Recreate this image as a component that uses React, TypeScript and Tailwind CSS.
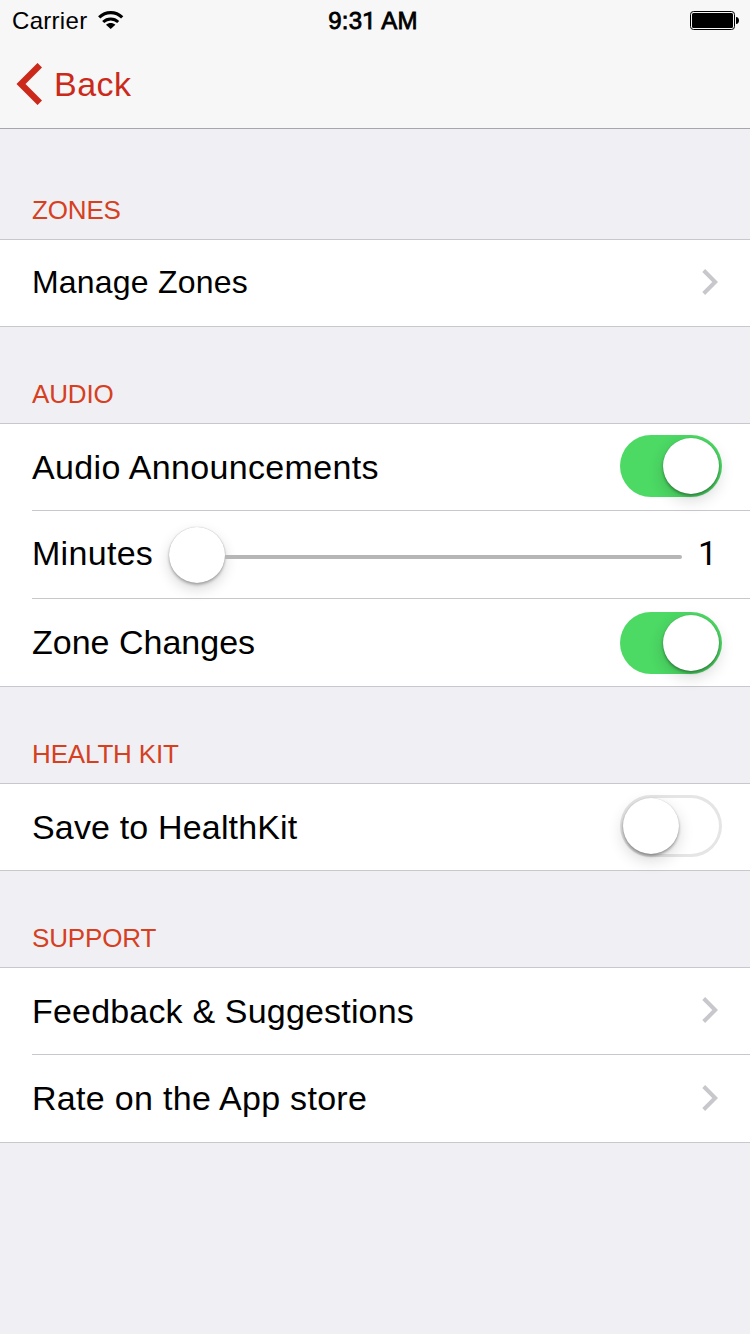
import type { ReactNode } from "react";

function Chevron() {
  return (
    <svg className="mt-[29px] h-[26px] w-4 shrink-0" viewBox="0 0 16 26" fill="none">
      <path d="M1.7 1.5 L13.2 13 L1.7 24.5" stroke="#c7c7cc" strokeWidth="4" />
    </svg>
  );
}

function Switch({ on, className }: { on: boolean; className: string }) {
  return (
    <div
      className={`-mr-1 flex h-[62px] w-[102px] shrink-0 rounded-full p-[3px] ${
        on ? "justify-end bg-[#4cd964]" : "bg-white shadow-[inset_0_0_0_3px_#e5e5e5]"
      } ${className}`}
    >
      <div className="size-14 rounded-full bg-white shadow-[0_0_1px_rgba(0,0,0,0.2),0_2px_3px_rgba(0,0,0,0.32),0_6px_16px_rgba(0,0,0,0.16)]" />
    </div>
  );
}

function Section({ title, tall, children }: { title: ReactNode; tall?: boolean; children: ReactNode }) {
  return (
    <section>
      <h2 className={`pl-8 text-[26px] leading-[30px] tracking-[-0.15px] text-[#d6401f] ${tall ? "h-[110px] pt-[66px]" : "h-24 pt-[52px]"}`}>
        {title}
      </h2>
      <div className="bg-white">{children}</div>
    </section>
  );
}

function Row({ first, last, children }: { first?: boolean; last?: boolean; children: ReactNode }) {
  return (
    <div className={`h-[88px] ${first ? "border-t border-[#c8c7cc]" : "pt-px"} ${last ? "" : "pl-8"}`}>
      <div className={`flex h-[87px] items-start justify-between border-b border-[#c8c7cc] pr-8 ${last ? "pl-8" : ""}`}>
        {children}
      </div>
    </div>
  );
}

export default function App() {
  return (
    <div className="h-[1334px] w-[750px] overflow-hidden bg-[#efeff4] font-['Liberation_Sans',Arial,sans-serif] text-black">
      <header className="h-[129px] border-b border-[#a7a7aa] bg-[#f7f7f7]">
        <div className="grid h-10 grid-cols-3 text-2xl leading-[28px]">
          <div className="flex pl-3 pt-[7px]">
            <span className="tracking-[0.3px]">Carrier</span>
            <svg className="ml-[11px] mt-1 h-[18px] w-[26px]" viewBox="0 0 26 18" fill="none">
              <path d="M1.2 6.4 C7.8 0 17.6 0 24.2 6.4" stroke="#000" strokeWidth="3.2" />
              <path d="M5.2 11 C9.5 7 15.9 7 20.2 11" stroke="#000" strokeWidth="3" />
              <path d="M8 13.8 C10.6 11.5 14.8 11.5 17.4 13.8 L12.7 18 Z" fill="#000" />
            </svg>
          </div>
          <div className="pr-[4px] pt-[7px] text-center">
            <span className="tracking-[0.15px] [-webkit-text-stroke:0.8px_#000]">
              9:3<span className="font-['Roboto',sans-serif]">1</span> AM
            </span>
          </div>
          <div className="flex justify-end pr-[11px] pt-[11px]">
            <svg className="h-[19px] w-[49px]" viewBox="0 0 49 19" fill="none">
              <rect x="0.5" y="0.5" width="44" height="18" rx="3" stroke="#000" />
              <rect x="2" y="2" width="41" height="15" rx="1.5" fill="#000" />
              <path d="M46 6 C50 6 50 13 46 13 Z" fill="#000" />
            </svg>
          </div>
        </div>
        <button className="flex items-start pl-4 text-[#cb2a1a]">
          <svg className="mt-[23px] h-[42px] w-[26px]" viewBox="0 0 26 42" fill="none">
            <path d="M23.8 2.2 L5 21 L23.8 39.8" stroke="currentColor" strokeWidth="6.4" />
          </svg>
          <span className="ml-3 mt-[24px] text-[34px] leading-[40px] tracking-[0.5px]">Back</span>
        </button>
      </header>

      <Section title="ZONES" tall>
        <Row first last>
          <span className="mt-[23px] text-[32px] leading-[38px] tracking-[0.2px]">Manage Zones</span>
          <Chevron />
        </Row>
      </Section>

      <Section title="AUDIO">
        <Row first>
          <span className="mt-[23px] text-[34px] leading-[40px] tracking-[0.35px]">Audio Announcements</span>
          <Switch on className="mt-[11px]" />
        </Row>
        <Row>
          <span className="mt-[21px] w-[121px] text-[34px] leading-[40px] tracking-[0.3px]">Minutes</span>
          <div className="ml-4 flex h-[86px] flex-1 items-start">
            <div className="mt-[15px] size-14 shrink-0 rounded-full bg-white shadow-[0_0_1px_rgba(0,0,0,0.3),0_2px_3px_rgba(0,0,0,0.26),0_6px_14px_rgba(0,0,0,0.16)]" />
            <div className="mt-[43px] h-1 flex-1 rounded-r-full bg-[#b6b6b6]" />
          </div>
          <span className="ml-4 mt-[21px] w-5 font-['Roboto',sans-serif] text-[34px] leading-[40px]">1</span>
        </Row>
        <Row last>
          <span className="mt-[22px] text-[34px] leading-[40px]">Zone Changes</span>
          <Switch on className="mt-3" />
        </Row>
      </Section>

      <Section title="HEALTH KIT">
        <Row first last>
          <span className="mt-[23px] text-[34px] leading-[40px] tracking-[0.16px]">Save to HealthKit</span>
          <Switch on={false} className="mt-[11px]" />
        </Row>
      </Section>

      <Section title="SUPPORT">
        <Row first>
          <span className="mt-[23px] text-[34px] leading-[40px] tracking-[0.18px]">Feedback &amp; Suggestions</span>
          <Chevron />
        </Row>
        <Row last>
          <span className="mt-[22px] text-[34px] leading-[40px] tracking-[0.3px]">Rate on the App store</span>
          <Chevron />
        </Row>
      </Section>
    </div>
  );
}
